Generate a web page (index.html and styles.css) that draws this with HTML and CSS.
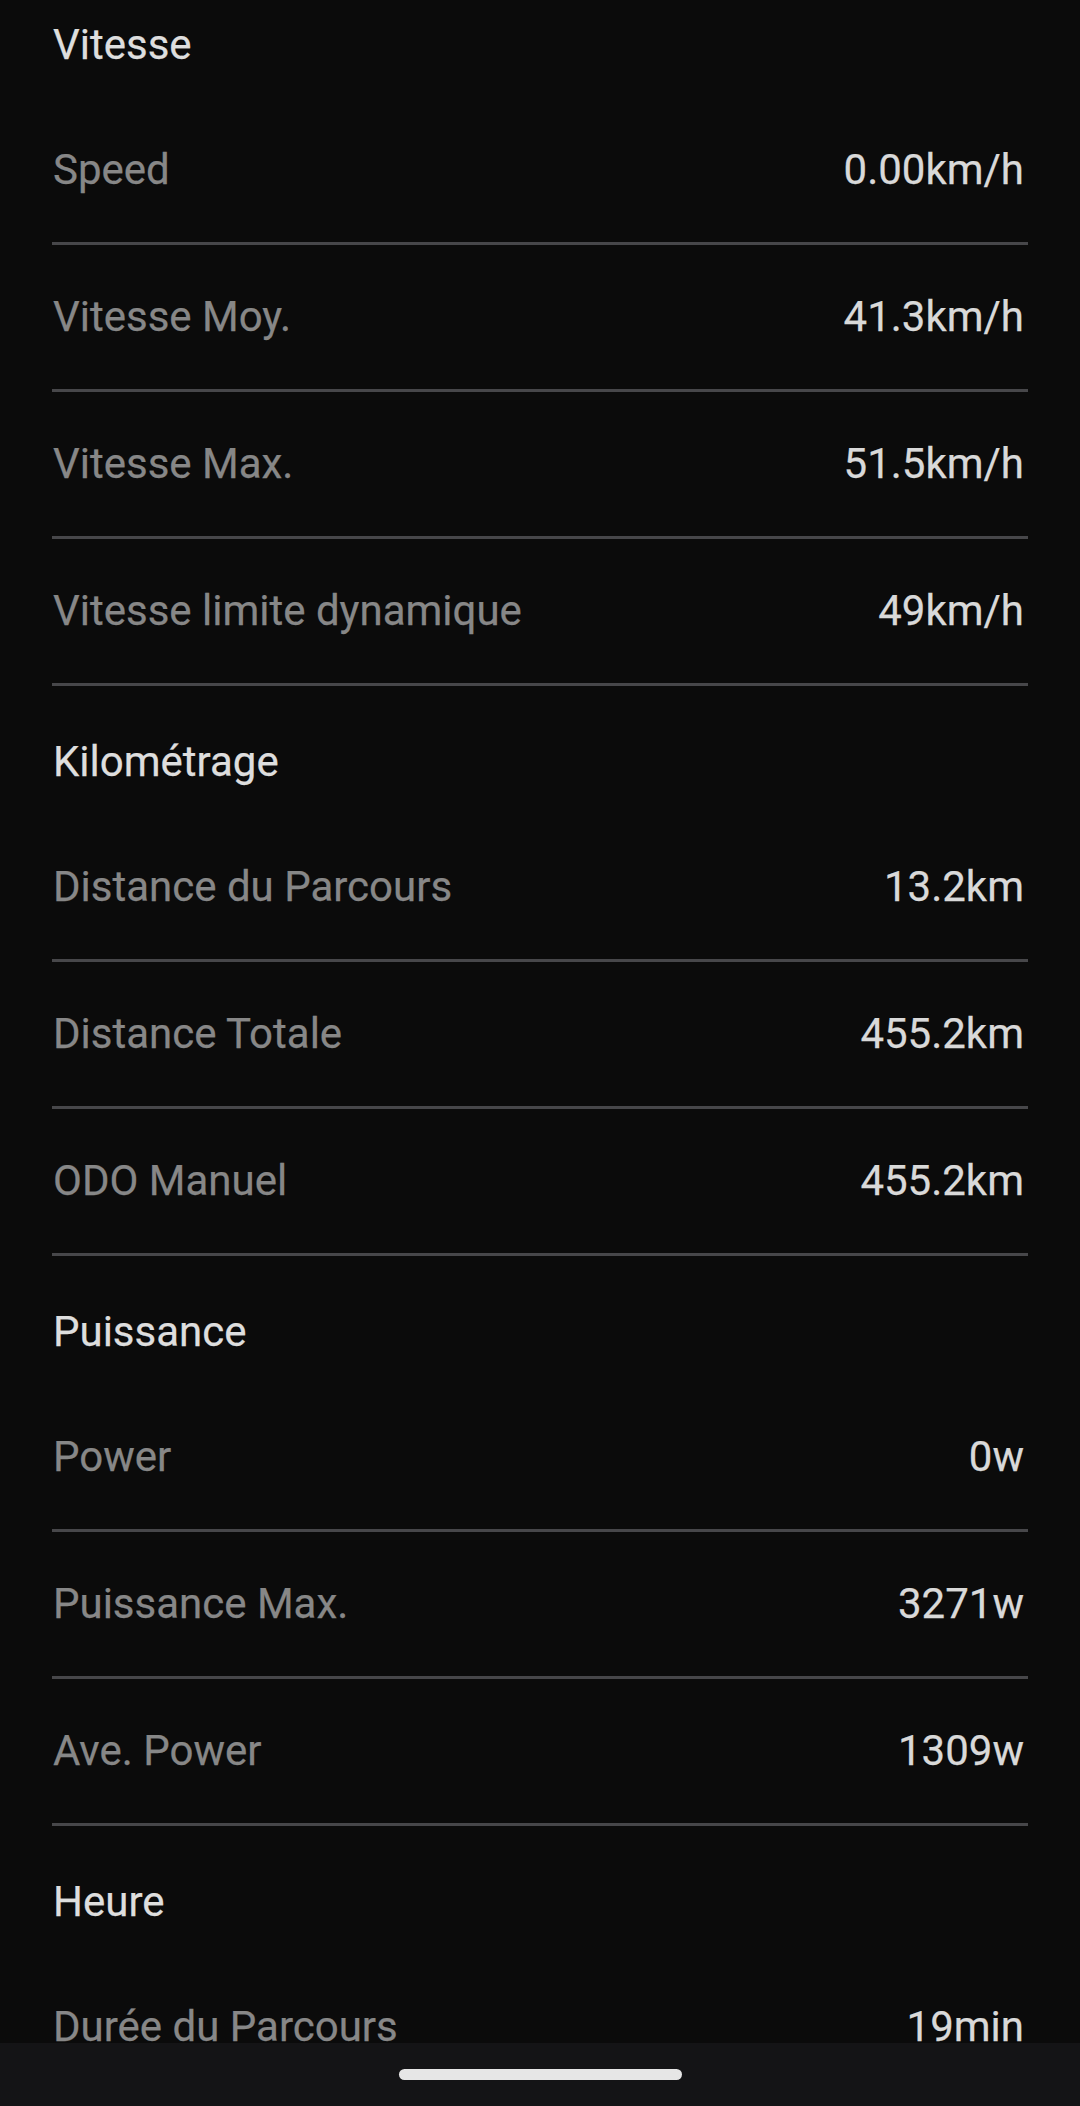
FILE: index.html
```html
<!DOCTYPE html>
<html lang="fr">

<head>
  <meta charset="UTF-8">
  <meta name="viewport" content="width=device-width, initial-scale=1.0">
  <title>Données du parcours</title>
  <link rel="stylesheet" href="styles.css">
</head>

<body>
  <div class="stats">
    <section class="group">
      <h2 class="group-title">Vitesse</h2>
      <div class="row"><span class="label">Speed</span><span class="value">0.00km/h</span></div>
      <div class="row"><span class="label">Vitesse Moy.</span><span class="value">41.3km/h</span></div>
      <div class="row"><span class="label">Vitesse Max.</span><span class="value">51.5km/h</span></div>
      <div class="row"><span class="label">Vitesse limite dynamique</span><span class="value">49km/h</span></div>
    </section>

    <section class="group">
      <h2 class="group-title">Kilométrage</h2>
      <div class="row"><span class="label">Distance du Parcours</span><span class="value">13.2km</span></div>
      <div class="row"><span class="label">Distance Totale</span><span class="value">455.2km</span></div>
      <div class="row"><span class="label">ODO Manuel</span><span class="value">455.2km</span></div>
    </section>

    <section class="group">
      <h2 class="group-title">Puissance</h2>
      <div class="row"><span class="label">Power</span><span class="value">0w</span></div>
      <div class="row"><span class="label">Puissance Max.</span><span class="value">3271w</span></div>
      <div class="row"><span class="label">Ave. Power</span><span class="value">1309w</span></div>
    </section>

    <section class="group">
      <h2 class="group-title">Heure</h2>
      <div class="row"><span class="label">Durée du Parcours</span><span class="value">19min</span></div>
    </section>
  </div>

  <div class="nav-bar">
    <div class="nav-handle"></div>
  </div>
</body>

</html>
```

FILE: styles.css
```css
html,
body {
  height: 100%;
  overflow: hidden;
}

body {
  margin: 0;
  background-color: #0b0b0b;
  font-family: Roboto, "Liberation Sans", sans-serif;
  font-size: 42px;
  color: #dcdcdc;
  -webkit-text-stroke: 0.25px currentColor;
}

/* list is scrolled a little, first title sits partly above the top */
.stats {
  margin-top: -31px;
  padding: 0 52px 0 52px;
}

.group-title {
  margin: 0;
  padding: 48px 0 25px 1px;
  font-size: 42px;
  font-weight: 400;
  line-height: 56px;
  color: #dedede;
}

.row {
  display: flex;
  justify-content: space-between;
  align-items: center;
  height: 144px;
  border-bottom: 3px solid #47474a;
  line-height: 56px;
}

.label {
  padding-left: 1px;
  color: #878787;
}

.value {
  padding-right: 4px;
  color: #d9d9d9;
}

.nav-bar {
  position: fixed;
  left: 0;
  right: 0;
  bottom: 0;
  height: 63px;
  background-color: #141416;
  display: flex;
  justify-content: center;
  padding-top: 26px;
  box-sizing: border-box;
}

.nav-handle {
  width: 283px;
  height: 11px;
  border-radius: 6px;
  background-color: #e6e6e6;
}
```
